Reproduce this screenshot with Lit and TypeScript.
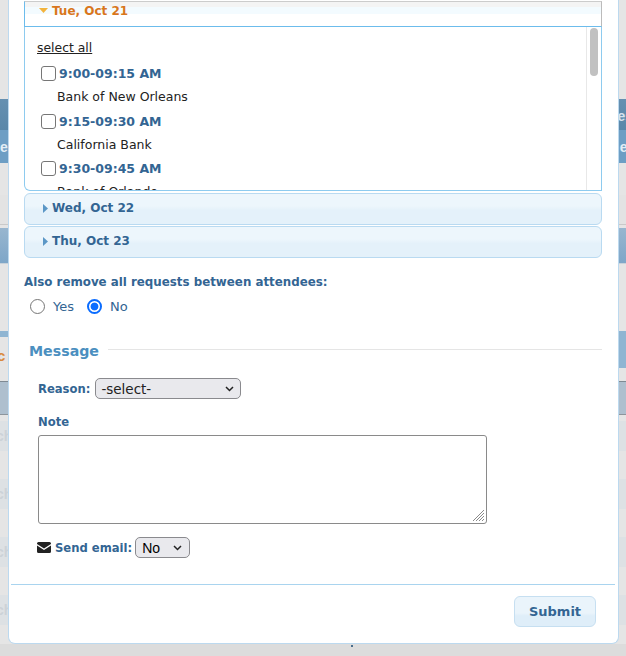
import { LitElement, html, css } from "lit";
import { customElement } from "lit/decorators.js";

const SLOTS = [
  ["9:00-09:15 AM", "Bank of New Orleans"],
  ["9:15-09:30 AM", "California Bank"],
  ["9:30-09:45 AM", "Bank of Orlando"],
];

const chevron = html`<svg class="chev" width="9" height="6" viewBox="0 0 9 6"><path d="M1 1l3.500 3.500L8 1" fill="none" stroke="#222" stroke-width="1.500"/></svg>`;

@customElement("app-root")
export class AppRoot extends LitElement {
  static styles = css`
    :host {
      display: block;
      position: relative;
      width: 626px;
      height: 656px;
      overflow: hidden;
      background: #dcdcdc;
      font-family: "DejaVu Sans", sans-serif;
      font-size: 12px;
      color: #222;
    }
    .backdrop { display: flex; flex-direction: column; height: 644px; background: #e5e5e5; }
    .b { flex: none; display: flex; justify-content: space-between; overflow: hidden; font-size: 14px; line-height: 34px; font-family: "Liberation Sans", sans-serif; font-weight: 700; }
    .b .r { margin-right: -7px; }
    .s1 { height: 99px; }
    .s2 { height: 31px; background: linear-gradient(#6590b1, #5a87a9); color: #d5e2ec; }
    .s3 { height: 33px; background: #6d9ec4; color: #e2edf5; }
    .s4 { height: 32px; }
    .s5 { height: 29px; border-bottom: 1px solid #c9c9c9; background: #e3e3e3; }
    .s6 { height: 3px; background: #e5e5e5; }
    .s7 { height: 35px; background: linear-gradient(#98b6cf, #7ea6c8); }
    .s8 { height: 67px; border-top: 1px solid #c8d2da; }
    .s9 { height: 6px; background: #8fb5d2; }
    .s10 { height: 44px; color: #d98a3d; font-size: 15px; line-height: 38px; align-items: flex-start; }
    .s10 span { margin-left: -3px; }
    .s10 em { display: block; width: 8px; height: 31px; background: #8fb5d2; }
    .s11 { height: 34px; background: #aebfce; border-top: 1px solid #7f8a93; border-bottom: 1px solid #8d959c; box-sizing: border-box; }
    .s12 { height: 6px; }
    .row { height: 30px; background: #dde1e4; color: #ccd2d7; line-height: 30px; }
    .gap { height: 28px; }
    .row span { margin-left: -4px; }
    .bottom { height: 12px; padding-left: 351px; }
    .bottom i { display: block; width: 2px; height: 2px; margin-top: 1px; background: #4a6d8c; }

    .modal {
      position: absolute;
      left: 8px;
      top: 0;
      width: 611px;
      height: 644px;
      box-sizing: border-box;
      background: #fff;
      border: 1px solid #bcd9ef;
      border-top: 0;
      border-radius: 0 0 7px 7px;
      display: flex;
      flex-direction: column;
    }
    .body { flex: 1; padding: 1px 16px 0 15px; display: flex; flex-direction: column; }
    .ahead {
      box-sizing: border-box;
      border: 1px solid #b9daf1;
      border-radius: 6px;
      height: 32px;
      display: flex;
      align-items: center;
      gap: 4px;
      padding: 0 0 2px 18px;
      font-weight: 700;
      font-size: 12px;
      color: #336593;
      background: linear-gradient(#edf6fc 0 40%, #e4f1fa 55% 100%);
    }
    .ahead + .ahead { margin-top: 1px; }
    .ahead.open {
      height: 26px;
      border-radius: 0;
      border: 0;
      border-top: 1px solid #ccc;
      border-right: 1px solid #bbb;
      border-left: 1px solid #6cbcec;
      border-bottom: 1px solid #6cbcec;
      color: #d9761c;
      padding: 0 0 6px 14px;
      background: linear-gradient(#f4f4f4 0 5px, #f3fbff 5px 12px, #fff 12px);
    }
    .ahead.open svg { margin-top: -2px; }
    .panel {
      box-sizing: border-box;
      height: 164px;
      display: flex;
      border: 1px solid #8ecbef;
      border-top: 0;
      border-radius: 0 0 0 6px;
      margin-bottom: 2px;
      overflow: hidden;
    }
    .list { flex: 1; padding: 13px 0 0 12px; overflow: hidden; }
    .all { text-decoration: underline; line-height: 15px; margin-bottom: 7px; display: block; font-size: 12.400px; color: #222; }
    .time { display: flex; align-items: center; height: 23px; padding-left: 4px; gap: 3px; font-weight: 700; font-size: 12.500px; color: #336593; }
    .check { appearance: none; margin: 0; width: 15px; height: 15px; box-sizing: border-box; background: #fff; border: 1px solid #767676; border-radius: 3px; }
    .bank { height: 24.500px; line-height: 23px; padding-left: 20px; white-space: nowrap; font-size: 12.500px; }
    .bar { width: 15px; flex: none; border-left: 1px solid #e8e8e8; padding: 1px 0 0 3px; box-sizing: border-box; }
    .thumb { width: 8px; height: 48px; background: #c1c1c1; border-radius: 4px; }

    .q { margin-top: 16px; font-weight: 700; font-size: 11.850px; line-height: 16px; color: #336593; }
    .radios { display: flex; align-items: center; height: 20px; margin-top: 6px; padding-left: 6px; color: #336593; font-size: 13px; }
    .radio { appearance: none; margin: 0 8px 0 0; width: 15px; height: 15px; box-sizing: border-box; border: 1px solid #767676; border-radius: 50%; background: #fff; }
    .radio.on { border: 2px solid #0a6cff; background: radial-gradient(circle, #0a6cff 0 3.500px, #fff 4.300px); }
    .radios label { margin-right: 13px; }
    .legend { display: flex; align-items: center; gap: 9px; margin-top: 25px; padding-left: 5px; font-weight: 700; font-size: 14.200px; line-height: 20px; color: #4b8fc0; }
    .legend i { flex: 1; height: 1px; background: #e5e5e5; margin-top: -3px; }
    .fields { padding-left: 14px; }
    .lab { font-weight: 700; font-size: 11.600px; color: #336593; }
    .line { display: flex; align-items: center; gap: 5px; }
    .reason { margin-top: 17px; }
    .sel { position: relative; display: inline-flex; }
    select {
      appearance: none;
      box-sizing: border-box;
      height: 21px;
      border: 1px solid #8a8a8e;
      border-radius: 5px;
      background: #e9e9ed;
      color: #222;
      padding: 0 0 0 5px;
      margin: 0;
      font-family: "DejaVu Sans", sans-serif;
      font-size: 13.500px;
    }
    .sr { width: 146px; }
    .sn { width: 55px; font-family: "Liberation Sans", sans-serif; font-size: 14px; padding-left: 6px; color: #000; }
    .chev { position: absolute; right: 7px; top: 8px; pointer-events: none; }
    .note { margin-top: 15px; line-height: 16px; }
    .ta { display: flex; position: relative; width: 449px; margin-top: 5px; }
    .grip { position: absolute; right: 2px; bottom: 2px; pointer-events: none; }
    textarea {
      width: 449px;
      height: 89px;
      box-sizing: border-box;
      margin: 0;
      padding: 2px;
      border: 1px solid #8a8a8a;
      border-radius: 3px;
      background: #fff;
      resize: none;
    }
    .send { margin-top: 13px; gap: 3px; margin-left: -1px; }
    .send svg { margin-right: 1px; }
    .foot {
      height: 59px;
      box-sizing: border-box;
      margin: 0 3px 0 2px;
      border-top: 1px solid #a9d4ef;
      display: flex;
      justify-content: flex-end;
      padding: 11px 19px 0 0;
    }
    button {
      width: 82px;
      height: 31px;
      box-sizing: border-box;
      border: 1px solid #c6dff1;
      border-radius: 6px;
      background: linear-gradient(#eaf4fb 0 55%, #dfeef9 65% 100%);
      color: #336593;
      font-family: "DejaVu Sans", sans-serif;
      font-weight: 700;
      font-size: 13px;
      padding: 0;
    }
  `;

  render() {
    return html`
      <div class="backdrop">
        <div class="b s1"></div>
        <div class="b s2"><span></span><span class="r">es</span></div>
        <div class="b s3"><span>es</span><span class="r">er</span></div>
        <div class="b s4"></div>
        <div class="b s5"></div>
        <div class="b s6"></div>
        <div class="b s7"></div>
        <div class="b s8"></div>
        <div class="b s9"></div>
        <div class="b s10"><span>c</span><em></em></div>
        <div class="b s11"></div>
        <div class="b s12"></div>
        <div class="b row"><span>ch</span></div>
        <div class="b gap"></div>
        <div class="b row"><span>ch</span></div>
        <div class="b gap"></div>
        <div class="b row"><span>ch</span></div>
        <div class="b gap"></div>
        <div class="b row"><span>ch</span></div>
      </div>
      <div class="bottom"><i></i></div>
      <div class="modal">
        <div class="body">
          <div class="ahead open">
            <svg width="9" height="5" viewBox="0 0 9 5"><path d="M0 0h9L4.500 5z" fill="#f3b33d"/></svg>
            Tue, Oct 21
          </div>
          <div class="panel">
            <div class="list">
              <span class="all">select all</span>
              ${SLOTS.map(
                ([t, b]) => html`<div class="slot">
                  <div class="time"><input class="check" type="checkbox" />${t}</div>
                  <div class="bank">${b}</div>
                </div>`
              )}
            </div>
            <div class="bar"><div class="thumb"></div></div>
          </div>
          <div class="ahead">
            <svg width="5" height="9" viewBox="0 0 5 9"><path d="M0 0l5 4.500L0 9z" fill="#5b97c6"/></svg>
            Wed, Oct 22
          </div>
          <div class="ahead">
            <svg width="5" height="9" viewBox="0 0 5 9"><path d="M0 0l5 4.500L0 9z" fill="#5b97c6"/></svg>
            Thu, Oct 23
          </div>
          <div class="q">Also remove all requests between attendees:</div>
          <div class="radios">
            <input class="radio" type="radio" name="r" /><label>Yes</label>
            <input class="radio on" type="radio" name="r" /><label>No</label>
          </div>
          <div class="legend">Message<i></i></div>
          <div class="fields">
            <div class="line reason">
              <span class="lab">Reason:</span>
              <span class="sel"><select class="sr"><option>-select-</option></select>${chevron}</span>
            </div>
            <div class="lab note">Note</div>
            <div class="ta">
              <textarea></textarea>
              <svg class="grip" width="13" height="13" viewBox="0 0 13 13"><path d="M1 12L12 1M4 12l8-8M7 12l5-5M10 12l2-2" fill="none" stroke="#8a8a8a" stroke-width="1"/></svg>
            </div>
            <div class="line send">
              <svg width="14" height="11" viewBox="0 0 14 11"><path d="M1.500 0h11A1.500 1.500 0 0 1 14 1.500v.6L7 6.600 0 2.100v-.6A1.500 1.500 0 0 1 1.500 0zM0 3.600l7 4.500 7-4.500v5.900A1.500 1.500 0 0 1 12.500 11h-11A1.500 1.500 0 0 1 0 9.500z" fill="#222"/></svg>
              <span class="lab">Send email:</span>
              <span class="sel"><select class="sn"><option>No</option></select>${chevron}</span>
            </div>
          </div>
        </div>
        <div class="foot"><button>Submit</button></div>
      </div>
    `;
  }
}
